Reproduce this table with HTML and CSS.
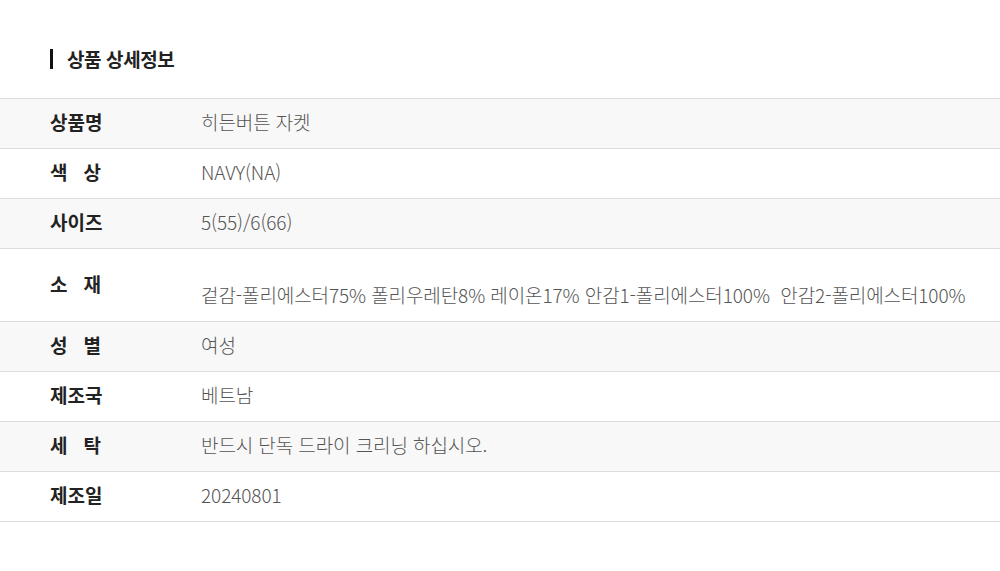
FILE: index.html
```html
<!DOCTYPE html>
<html lang="ko">

<head>
	<meta charset="UTF-8">
	<title>상품 상세정보</title>
	<link rel="stylesheet" href="styles.css">
</head>

<body>
	<div class="detail">
		<h2 class="detail-title">상품 상세정보</h2>

		<table class="info">
			<tr>
				<th><span class="label">상품명</span></th>
				<td>히든버튼 자켓</td>
			</tr>
			<tr>
				<th><span class="label">색 상</span></th>
				<td>NAVY(NA)</td>
			</tr>
			<tr>
				<th><span class="label">사이즈</span></th>
				<td>5(55)/6(66)</td>
			</tr>
			<tr>
				<th><span class="label">소 재</span></th>
				<td><br>겉감-폴리에스터75% 폴리우레탄8% 레이온17% 안감1-폴리에스터100% &nbsp;안감2-폴리에스터100%</td>
			</tr>
			<tr>
				<th><span class="label">성 별</span></th>
				<td>여성</td>
			</tr>
			<tr>
				<th><span class="label">제조국</span></th>
				<td>베트남</td>
			</tr>
			<tr>
				<th><span class="label">세 탁</span></th>
				<td>반드시 단독 드라이 크리닝 하십시오.</td>
			</tr>
			<tr>
				<th><span class="label">제조일</span></th>
				<td>20240801</td>
			</tr>
		</table>
	</div>
</body>

</html>
```

FILE: styles.css
```css
* {
	margin: 0;
	padding: 0;
	box-sizing: border-box;
}

body {
	background: #fff;
	font-family: "Noto Sans CJK KR", "Noto Sans", sans-serif;
	color: #222;
}

.detail {
	padding-top: 49px;
}

.detail-title {
	margin-left: 50px;
	padding-left: 14px;
	border-left: 3px solid #111;
	font-size: 19px;
	font-weight: 700;
	line-height: 20px;
	letter-spacing: -0.4px;
	color: #222;
}

.info {
	width: 100%;
	margin-top: 29px;
	border-collapse: collapse;
	border-top: 1px solid #ddd;
}

.info tr {
	border-bottom: 1px solid #ddd;
}

.info tr:nth-child(odd) {
	background: #f8f8f8;
}

.info th,
.info td {
	height: 49px;
	padding: 11px 0 15px;
	line-height: 23px;
	text-align: left;
	vertical-align: middle;
	white-space: nowrap;
}

.info th {
	width: 201px;
	padding-left: 50px;
	font-size: 19px;
	font-weight: 700;
	color: #222;
}

.label {
	display: inline-block;
	width: 51px;
	text-align: justify;
	text-align-last: justify;
}

.info td {
	font-size: 19px;
	font-weight: 300;
	color: #555;
	letter-spacing: -0.1px;
}
```
